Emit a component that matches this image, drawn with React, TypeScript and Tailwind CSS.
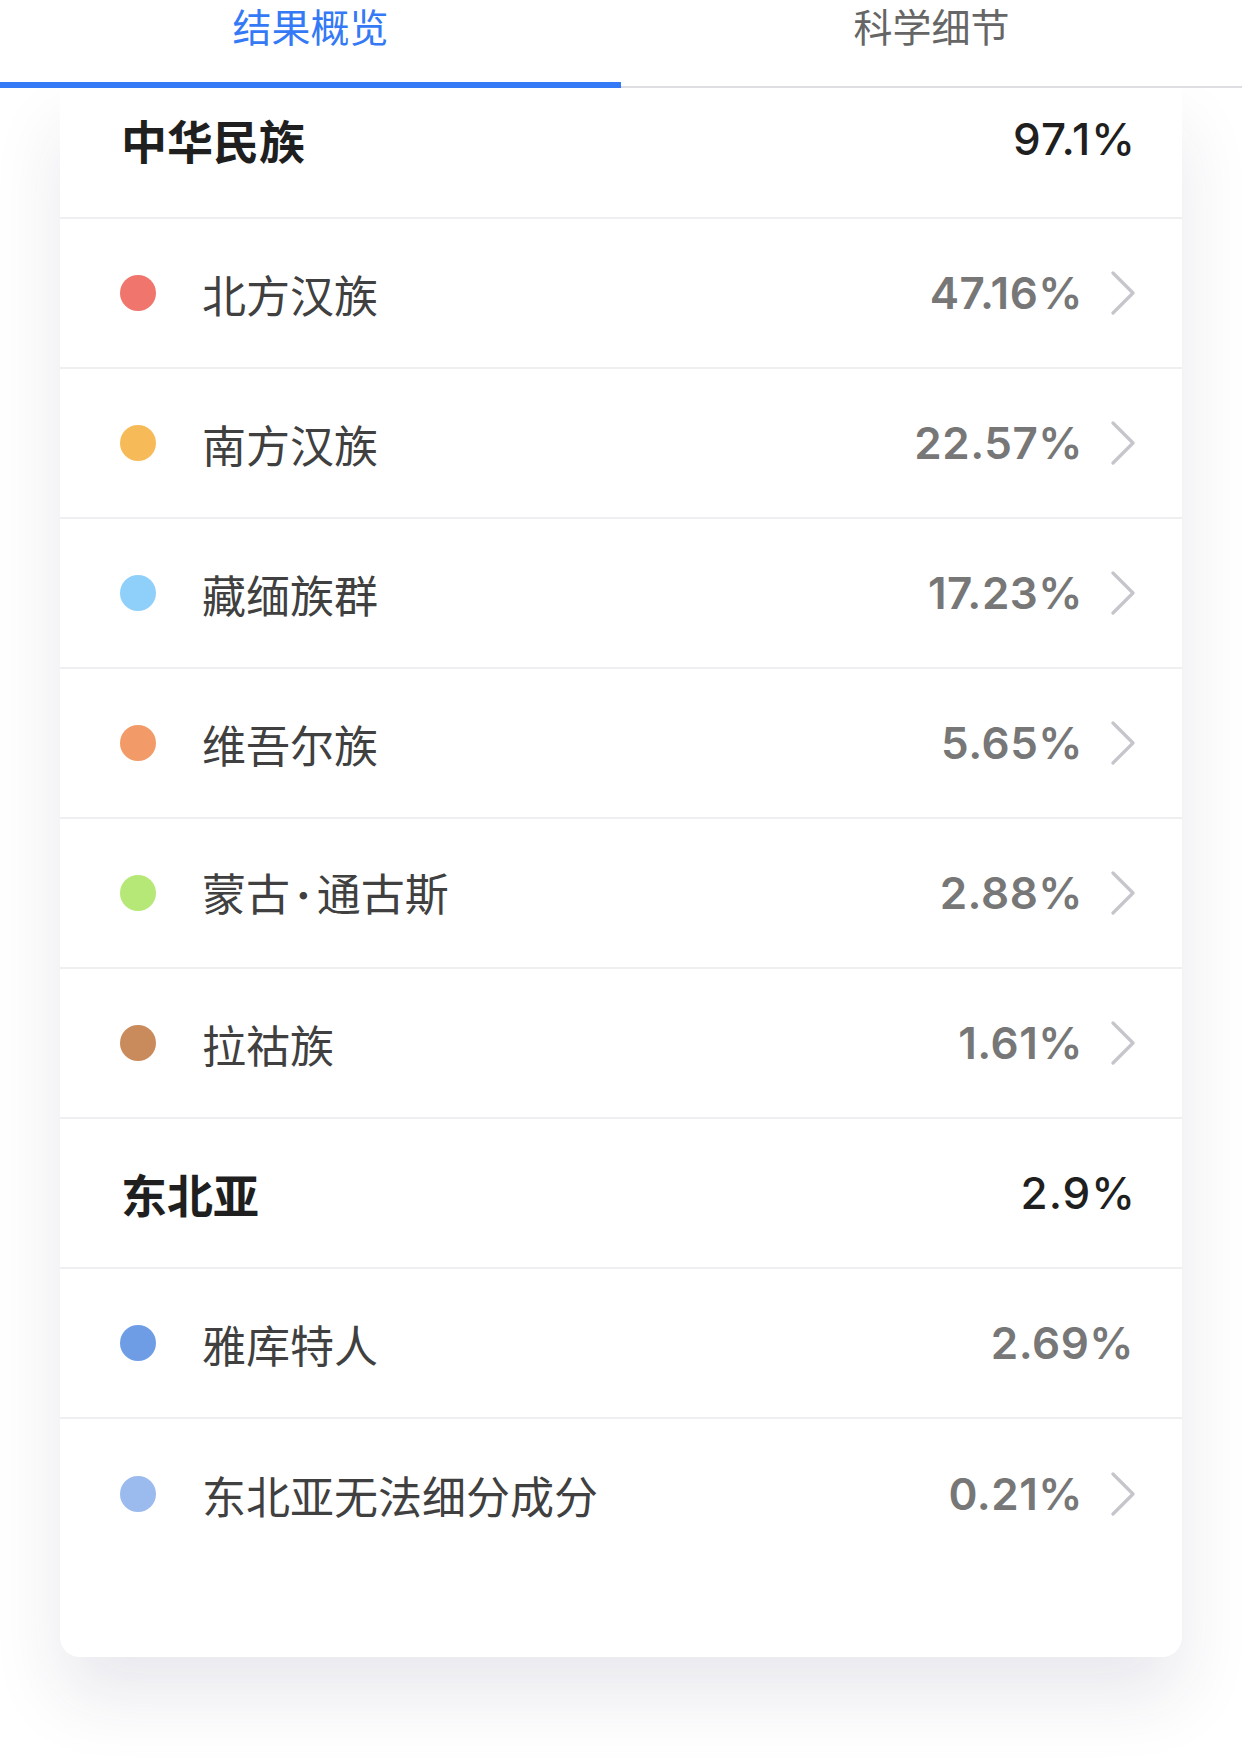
import React from "react";

type Item = {
  kind: "header" | "item";
  label: React.ReactNode;
  value: string;
  color?: string;
  chevron?: boolean;
};

const cjk = "font-['Noto_Sans_CJK_SC','Noto_Sans',sans-serif]";
const num = "font-['Inter','Noto_Sans',sans-serif]";

const items: Item[] = [
  { kind: "item", label: "北方汉族", value: "47.16%", color: "#f0756c", chevron: true },
  { kind: "item", label: "南方汉族", value: "22.57%", color: "#f6bb58", chevron: true },
  { kind: "item", label: "藏缅族群", value: "17.23%", color: "#8fd0fa", chevron: true },
  { kind: "item", label: "维吾尔族", value: "5.65%", color: "#f29a68", chevron: true },
  {
    kind: "item",
    label: (
      <>
        蒙古<span className={`${num} mx-[6px] font-bold`}>·</span>通古斯
      </>
    ),
    value: "2.88%",
    color: "#b5e876",
    chevron: true,
  },
  { kind: "item", label: "拉祜族", value: "1.61%", color: "#c98b5c", chevron: true },
  { kind: "header", label: "东北亚", value: "2.9%" },
  { kind: "item", label: "雅库特人", value: "2.69%", color: "#6e9de6", chevron: false },
  { kind: "item", label: "东北亚无法细分成分", value: "0.21%", color: "#9bbaee", chevron: true },
];

function Chevron() {
  return (
    <svg width="26" height="44" viewBox="0 0 26 44" className="ml-[27px] shrink-0">
      <path d="M3 2 L23 22 L3 42" fill="none" stroke="#c5c5cc" strokeWidth="3.2" strokeLinecap="round" strokeLinejoin="round" />
    </svg>
  );
}

function HeaderRow({ label, value, first }: { label: React.ReactNode; value: string; first?: boolean }) {
  return (
    <div
      className={`flex items-center justify-between pl-[61px] pr-[46px] border-b-2 border-[#efeff1] ${
        first ? "h-[131px] pb-[28px]" : "h-[150px]"
      }`}
    >
      <span className={`${cjk} text-[46px] font-semibold text-[#1f1f1f] leading-none`}>{label}</span>
      <span className={`${num} text-[44px] font-medium text-[#1f1f1f] leading-none tracking-[1px]`}>{value}</span>
    </div>
  );
}

function ItemRow({ item, last }: { item: Item; last?: boolean }) {
  return (
    <div
      className={`flex items-center h-[150px] pl-[60px] ${item.chevron ? "pr-[46px]" : "pr-[48px]"} ${
        last ? "" : "border-b-2 border-[#efeff1]"
      }`}
    >
      <span className="w-[36px] h-[36px] rounded-full shrink-0" style={{ backgroundColor: item.color }} />
      <span className={`${cjk} ml-[46px] text-[44px] text-[#404040] leading-none pt-[1px]`}>{item.label}</span>
      <span className={`${num} ml-auto text-[44px] font-semibold text-[#777777] leading-none tracking-[0.5px]`}>
        {item.value}
      </span>
      {item.chevron && <Chevron />}
    </div>
  );
}

export default function App() {
  return (
    <div className="min-h-[1760px] w-[1242px] bg-white overflow-hidden">
      <div className="relative flex h-[88px] bg-white border-b-2 border-[#dedee2]">
        <div className="flex-1 flex flex-col items-center pt-[2px]">
          <span className={`${cjk} text-[39px] leading-[46px] text-[#3479f5]`}>结果概览</span>
        </div>
        <div className="flex-1 flex flex-col items-center pt-[2px]">
          <span className={`${cjk} text-[39px] leading-[46px] text-[#666666]`}>科学细节</span>
        </div>
        <div className="absolute left-0 bottom-[-2px] w-[621px] h-[6px] bg-[#3479f5]" />
      </div>
      <div className="mx-[60px] bg-white rounded-b-[20px] pb-[88px] shadow-[0_40px_70px_rgba(40,40,90,0.10)]">
        <HeaderRow label="中华民族" value="97.1%" first />
        {items.map((it, i) =>
          it.kind === "header" ? (
            <HeaderRow key={i} label={it.label} value={it.value} />
          ) : (
            <ItemRow key={i} item={it} last={i === items.length - 1} />
          )
        )}
      </div>
    </div>
  );
}
